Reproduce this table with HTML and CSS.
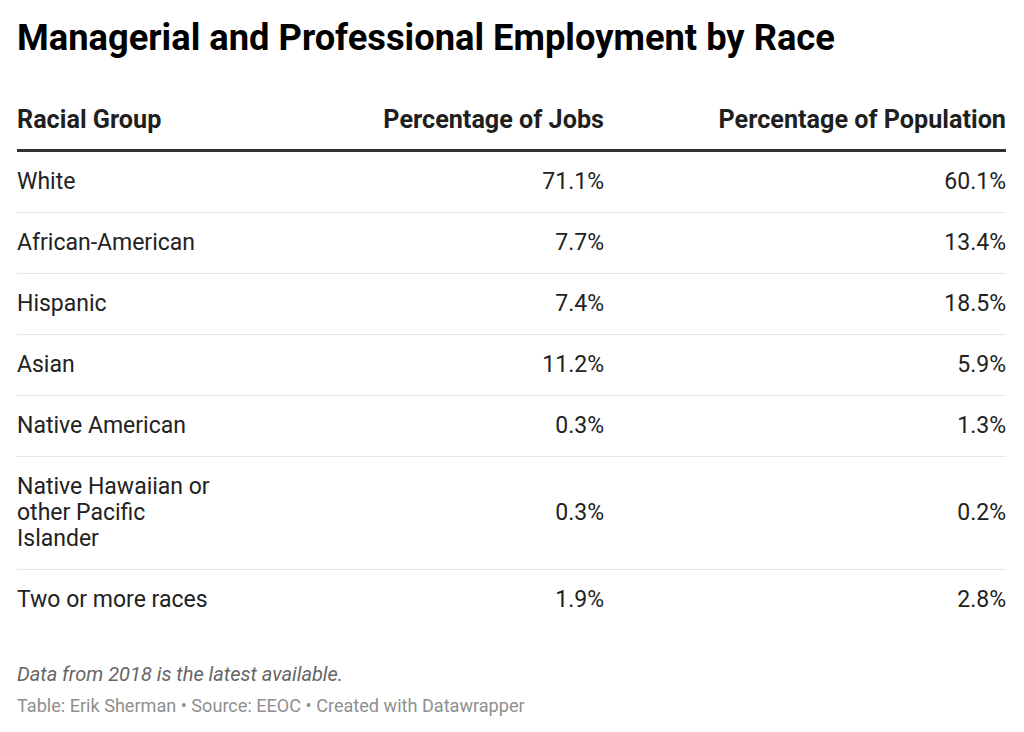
FILE: index.html
```html
<!DOCTYPE html>
<html>
<head>
<meta charset="utf-8">
<link rel="stylesheet" href="styles.css">
</head>
<body>
<div class="chart">
  <h1 class="title">Managerial and Professional Employment by Race</h1>
  <table class="table">
    <colgroup>
      <col class="c1"><col class="c2"><col class="c3">
    </colgroup>
    <thead>
      <tr><th class="left">Racial Group</th><th>Percentage of Jobs</th><th>Percentage of Population</th></tr>
    </thead>
    <tbody>
      <tr><td class="left">White</td><td>71.1%</td><td>60.1%</td></tr>
      <tr><td class="left">African-American</td><td>7.7%</td><td>13.4%</td></tr>
      <tr><td class="left">Hispanic</td><td>7.4%</td><td>18.5%</td></tr>
      <tr><td class="left">Asian</td><td>11.2%</td><td>5.9%</td></tr>
      <tr><td class="left">Native American</td><td>0.3%</td><td>1.3%</td></tr>
      <tr><td class="left">Native Hawaiian or other Pacific Islander</td><td>0.3%</td><td>0.2%</td></tr>
      <tr><td class="left">Two or more races</td><td>1.9%</td><td>2.8%</td></tr>
    </tbody>
  </table>
  <p class="notes">Data from 2018 is the latest available.</p>
  <p class="footer">Table: Erik Sherman • Source: EEOC • Created with Datawrapper</p>
</div>
</body>
</html>
```
FILE: styles.css
```css
html, body {
  margin: 0;
  padding: 0;
  background: #ffffff;
}
body {
  font-family: Roboto, "Liberation Sans", sans-serif;
  color: #333333;
}
.chart {
  padding: 17px 18px 0 17px;
}
.title {
  margin: 0;
  font-size: 36.3px;
  line-height: 42px;
  font-weight: 700;
  color: #000000;
}
.table {
  width: 989px;
  margin-top: 46px;
  border-collapse: collapse;
  table-layout: fixed;
}
.c1 { width: 205px; }
.c2 { width: 382px; }
.c3 { width: 402px; }
th {
  font-size: 25.2px;
  font-weight: 700;
  color: #1f1f1f;
  text-align: right;
  padding: 0 0 14px 0;
  line-height: 30px;
  border-bottom: 3px solid #333333;
}
td {
  font-size: 23px;
  line-height: 26px;
  color: #222222;
  text-align: right;
  padding: 17px 0 17px 0;
  border-bottom: 1px solid #e6e6e6;
  vertical-align: middle;
}
td.multi {
  padding-bottom: 18px;
}
tbody tr:last-child td {
  border-bottom: none;
}
.left {
  text-align: left;
}
.notes {
  margin: 32px 0 0 0;
  font-size: 20px;
  line-height: 24px;
  font-style: italic;
  color: #666666;
}
.footer {
  margin: 9px 0 0 0;
  font-size: 18.1px;
  line-height: 22px;
  color: #8f8f8f;
}
```
